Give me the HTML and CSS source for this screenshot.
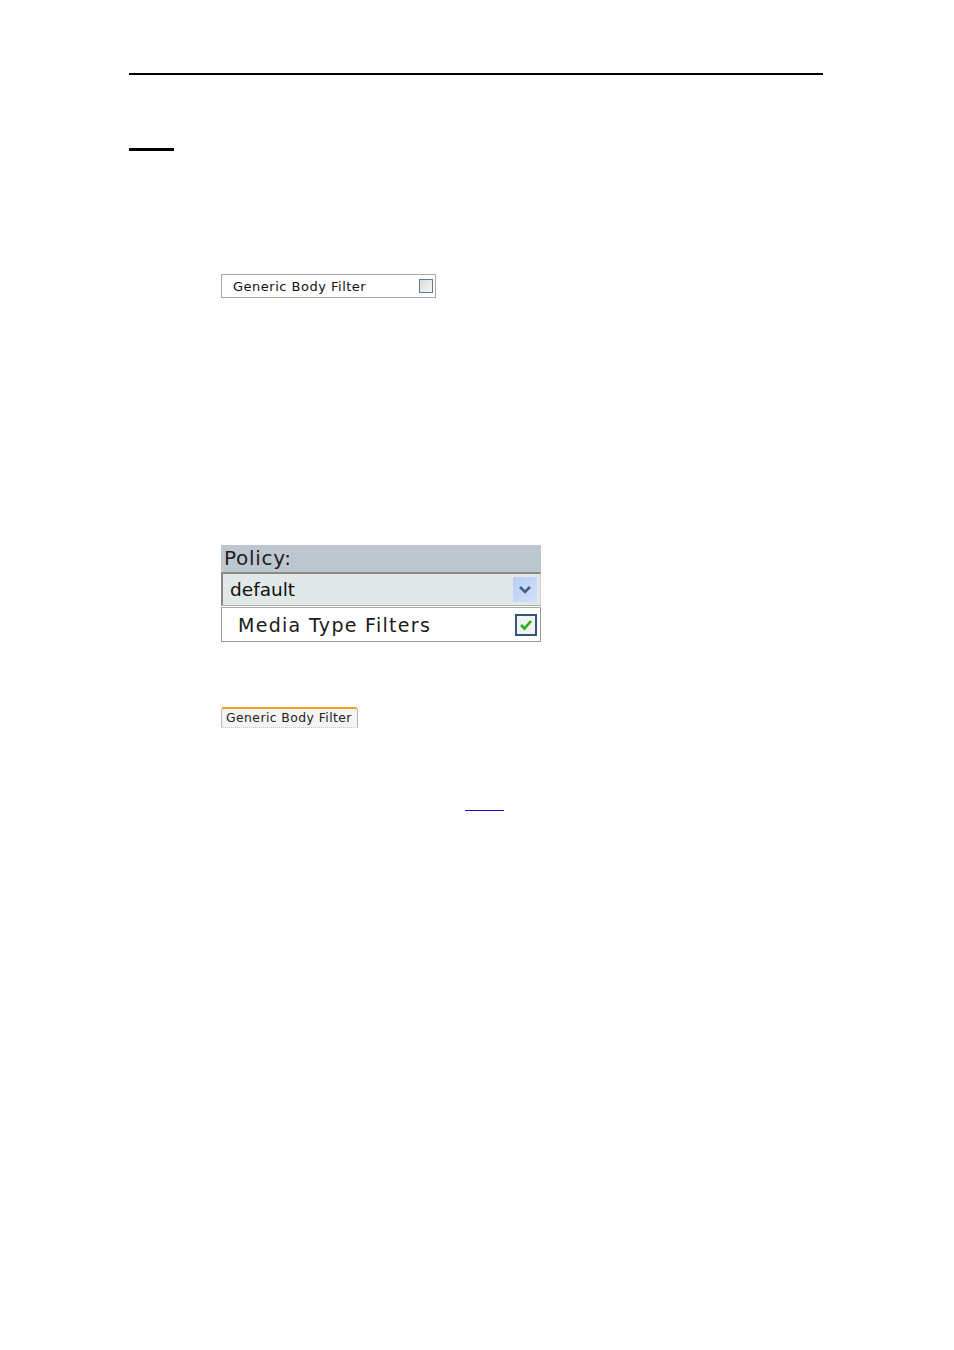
FILE: index.html
```html
<!DOCTYPE html>
<html>
<head>
<meta charset="utf-8">
<link rel="stylesheet" href="styles.css">
</head>
<body>
<div class="page">
  <div class="rule-top"></div>
  <div class="rule-short"></div>

  <div class="filter-box">
    <span class="filter-label">Generic Body Filter</span>
    <span class="cb-small"></span>
  </div>

  <div class="policy">
    <div class="policy-head">Policy:</div>
    <div class="policy-select">
      <span class="select-text">default</span>
      <span class="select-btn">
        <svg width="14" height="10" viewBox="0 0 14 10"><path d="M2 2 L7 7 L12 2" fill="none" stroke="#4a5c80" stroke-width="2.6"/></svg>
      </span>
    </div>
    <div class="policy-row">
      <span class="row-text">Media Type Filters</span>
      <span class="cb-big">
        <svg width="16" height="14" viewBox="0 0 16 14"><path d="M3 7 L6.5 10.5 L13 3" fill="none" stroke="#22b022" stroke-width="2.6"/></svg>
      </span>
    </div>
  </div>

  <div class="tab">Generic Body Filter</div>

  <div class="link-line"></div>
</div>
</body>
</html>
```

FILE: styles.css
```css
html, body {
  margin: 0;
  padding: 0;
  background: #ffffff;
}
.page {
  width: 954px;
  height: 1350px;
  padding-top: 73px;
  box-sizing: border-box;
  font-family: "DejaVu Sans", Verdana, sans-serif;
}
.rule-top {
  margin-left: 129px;
  width: 694px;
  height: 2px;
  background: #000;
}
.rule-short {
  margin-left: 129px;
  margin-top: 73px;
  width: 45px;
  height: 3px;
  background: #000;
}
.filter-box {
  margin-left: 221px;
  margin-top: 123px;
  width: 215px;
  height: 24px;
  box-sizing: border-box;
  border: 1px solid #a8a8a8;
  display: flex;
  align-items: center;
  justify-content: space-between;
  padding-left: 11px;
  padding-right: 2px;
}
.filter-label {
  font-size: 13px;
  letter-spacing: 0.5px;
  color: #111;
  padding-top: 1px;
}
.cb-small {
  width: 14px;
  height: 14px;
  box-sizing: border-box;
  border: 1px solid #5a7ca8;
  background: linear-gradient(135deg, #dcdcd6, #f6f6f2);
}
.policy {
  margin-left: 221px;
  margin-top: 247px;
  width: 320px;
}
.policy-head {
  height: 27px;
  background: #bec6d0;
  font-size: 20px;
  letter-spacing: 0.7px;
  line-height: 27px;
  padding-left: 3px;
  color: #1e1e1e;
}
.policy-select {
  height: 34px;
  box-sizing: border-box;
  border-top: 2px solid #8a8a82;
  border-left: 2px solid #8a8a82;
  border-bottom: 1px solid #b0b0b0;
  border-right: 1px solid #d0d0d0;
  background: #e0e8e8;
  display: flex;
  align-items: center;
  justify-content: space-between;
  padding-left: 7px;
  padding-right: 3px;
}
.select-text {
  font-size: 18.5px;
  color: #111;
}
.select-btn {
  width: 24px;
  height: 25px;
  background: linear-gradient(135deg, #b8cdf4, #d3e0fa);
  display: flex;
  align-items: center;
  justify-content: center;
}
.policy-row {
  height: 35px;
  box-sizing: border-box;
  border: 1px solid #999;
  border-top: 1px solid #aaa;
  margin-top: 1px;
  background: #fff;
  display: flex;
  align-items: center;
  justify-content: space-between;
  padding-left: 16px;
  padding-right: 3px;
}
.row-text {
  font-size: 19px;
  color: #1a1a1a;
  letter-spacing: 1.3px;
}
.cb-big {
  width: 22px;
  height: 22px;
  box-sizing: border-box;
  border: 2px solid #33557a;
  background: #f2f2ee;
  display: flex;
  align-items: center;
  justify-content: center;
}
.tab {
  margin-left: 221px;
  margin-top: 65px;
  width: 137px;
  height: 21px;
  box-sizing: border-box;
  border-top: 2px solid #f0a020;
  border-left: 1px solid #b8b8b8;
  border-right: 1px solid #b8b8b8;
  border-bottom: 1px dotted #c8c8c8;
  border-radius: 3px 3px 0 0;
  background: #f4f4f2;
  font-size: 12.4px;
  letter-spacing: 0.42px;
  line-height: 18px;
  padding-left: 4px;
  color: #222;
  white-space: nowrap;
}
.link-line {
  margin-left: 465px;
  margin-top: 82px;
  width: 39px;
  height: 1px;
  background: #1010cc;
}
```
